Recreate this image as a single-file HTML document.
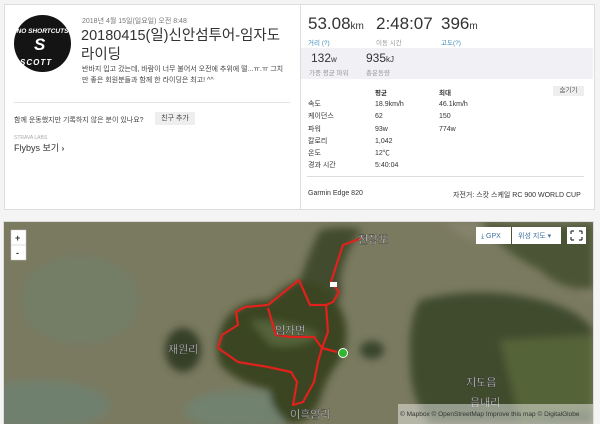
<!DOCTYPE html>
<html><head><meta charset="utf-8"><style>
*{margin:0;padding:0;box-sizing:border-box}
body{width:600px;height:424px;background:#f4f4f4;font-family:"Liberation Sans","Noto Sans CJK KR",sans-serif;color:#333;position:relative;overflow:hidden}
.a{position:absolute;white-space:nowrap}
.card{position:absolute;left:4px;top:4px;width:591px;height:206px;background:#fff;border:1px solid #ddd}
.s{font-size:7px;color:#333}
</style></head><body>
<div class="card"></div>
<div class="a" style="left:300px;top:4px;width:1px;height:206px;background:#ddd"></div>
<div class="a" style="left:14px;top:15px;width:57px;height:57px;border-radius:50%;background:#141414"></div>
<div class="a" style="left:16px;top:28px;font-size:6.5px;color:#fff;font-style:italic;font-weight:bold;width:53px;text-align:center">NO SHORTCUTS</div>
<div class="a" style="left:34px;top:35px;font-size:17px;color:#fff;font-weight:bold;font-style:italic">S</div>
<div class="a" style="left:20px;top:58px;font-size:8px;color:#fff;font-weight:bold;font-style:italic;letter-spacing:1px">SCOTT</div>
<div class="a" style="left:82px;top:16px;font-size:7px;color:#777">2018년 4월 15일(일요일) 오전 8:48</div>
<div class="a" style="left:81px;top:27px;font-size:14.5px;color:#333;line-height:19px">20180415(일)신안섬투어-임자도<br>라이딩</div>
<div class="a" style="left:82px;top:64px;font-size:7px;color:#444;line-height:11px">반바지 입고 갔는데, 바람이 너무 불어서 오전에 추위에 떨...ㅠ.ㅠ 그치<br>만 좋은 회원분들과 함께 한 라이딩은 최고! ^^</div>
<div class="a" style="left:14px;top:102px;width:276px;height:1px;background:#e4e4e4"></div>
<div class="a" style="left:14px;top:115px;font-size:7px;color:#444">함께 운동했지만 기록하지 않은 분이 있나요?</div>
<div class="a" style="left:155px;top:112px;width:40px;height:13px;background:#eee;font-size:7px;color:#444;text-align:center;line-height:13px">친구 추가</div>
<div class="a" style="left:14px;top:135px;font-size:5px;color:#aaa">STRAVA LABS</div>
<div class="a" style="left:14px;top:141px;font-size:9px;color:#333">Flybys 보기 <b style="font-size:8px">›</b></div>

<div class="a" style="left:308px;top:14px;font-size:17px;color:#333">53.08<span style="font-size:10px">km</span></div>
<div class="a" style="left:376px;top:14px;font-size:17px;color:#333">2:48:07</div>
<div class="a" style="left:441px;top:14px;font-size:17px;color:#333">396<span style="font-size:10px">m</span></div>
<div class="a" style="left:308px;top:37px;font-size:6.5px;color:#3a8ab5">거리 (?)</div>
<div class="a" style="left:376px;top:37px;font-size:6.5px;color:#999">이동 시간</div>
<div class="a" style="left:441px;top:37px;font-size:6.5px;color:#3a8ab5">고도(?)</div>
<div class="a" style="left:301px;top:48px;width:292px;height:31px;background:#f1f1f5"></div>
<div class="a" style="left:311px;top:51px;font-size:12px;color:#333">132<span style="font-size:8px">w</span></div>
<div class="a" style="left:366px;top:51px;font-size:12px;color:#333">935<span style="font-size:8px">kJ</span></div>
<div class="a" style="left:309px;top:67px;font-size:6.5px;color:#999">가중 평균 파워</div>
<div class="a" style="left:366px;top:67px;font-size:6.5px;color:#999">총운동량</div>
<div class="a" style="left:375px;top:87px;font-size:6.5px;color:#333;font-weight:bold">평균</div>
<div class="a" style="left:439px;top:87px;font-size:6.5px;color:#333;font-weight:bold">최대</div>
<div class="a" style="left:553px;top:86px;width:31px;height:10px;background:#eee;font-size:6.5px;color:#555;text-align:center;line-height:10px">숨기기</div>
<div class="a s" style="left:308px;top:99px;line-height:12.3px">속도<br>케이던스<br>파워<br>칼로리<br>온도<br>경과 시간</div>
<div class="a s" style="left:375px;top:99px;line-height:12.3px">18.9km/h<br>62<br>93w<br>1,042<br>12℃<br>5:40:04</div>
<div class="a s" style="left:439px;top:99px;line-height:12.3px">46.1km/h<br>150<br>774w</div>
<div class="a" style="left:307px;top:176px;width:277px;height:1px;background:#ddd"></div>
<div class="a s" style="left:308px;top:190px">Garmin Edge 820</div>
<div class="a s" style="left:453px;top:190px">자전거: 스캇 스케일 RC 900 WORLD CUP</div>

<svg class="a" style="left:0;top:0" width="600" height="424">
<defs><clipPath id="m"><rect x="4" y="222" width="589" height="202"/></clipPath>
<filter id="b"><feGaussianBlur stdDeviation="4"/></filter></defs>
<rect x="3" y="221" width="591" height="203" fill="#ddd"/>
<g clip-path="url(#m)">
<rect x="4" y="222" width="589" height="202" fill="#7a7a60"/>
<g filter="url(#b)">
<ellipse cx="80" cy="300" rx="60" ry="45" fill="#728069" opacity=".6"/>
<ellipse cx="40" cy="405" rx="70" ry="25" fill="#6a8476" opacity=".6"/>
<ellipse cx="240" cy="410" rx="55" ry="20" fill="#6a8a7e" opacity=".5"/>
<path d="M440 222 L470 240 L560 250 L580 290 L593 300 L593 222Z" fill="#85836c"/>
<path d="M420 300 Q480 285 540 300 Q580 310 593 330 L593 424 L430 424 Q410 400 410 360 Q408 320 420 300Z" fill="#414b2e"/>
<path d="M500 340 L593 335 L593 410 L520 420Z" fill="#5a6a3a" opacity=".8"/>
<path d="M480 222 Q560 226 593 222 L593 290 Q560 290 540 270 Q500 250 480 222Z" fill="#4b5535"/>
<path d="M320 230 Q345 225 362 230 Q345 250 340 280 Q345 300 330 310 Q310 300 300 280 Q310 250 320 230Z" fill="#424c2e"/>
<path d="M300 280 Q335 285 345 320 Q350 345 340 360 Q325 380 320 400 Q310 424 290 424 Q270 410 270 390 Q240 385 220 365 Q212 345 225 320 Q240 300 270 300 Q285 285 300 280Z" fill="#3a4524"/>
<path d="M250 320 Q290 320 320 335 Q300 350 270 345Z" fill="#5c6a40" opacity=".8"/>
<ellipse cx="183" cy="350" rx="18" ry="22" fill="#353f26"/>
<ellipse cx="372" cy="350" rx="12" ry="9" fill="#38442a"/>
</g>
<path d="M362 238 L343 245 L337 263 L331 282 L339 292 L333 302 L326 305 L310 305 L299 280 L268 305 L245 307 L236 312 L238 325 L222 335 L218 348 L238 362 L268 367 L291 372 L297 382 L293 405 L303 402 L314 382 L318 362 L322 348 L314 337 L291 337 L276 335 L268 308 M326 305 L328 332 L322 348 L337 352" fill="none" stroke="#e0211c" stroke-width="2.2" stroke-linejoin="round"/>
<rect x="330" y="282" width="7" height="5" fill="#fff"/>
<circle cx="343" cy="353" r="4.5" fill="#2db82d" stroke="#fff" stroke-width="1"/>
<g font-family="Liberation Sans,Noto Sans CJK KR,sans-serif" font-size="11" fill="#fff" stroke="#333" stroke-width=".4">
<text x="358" y="243">전장포</text><text x="275" y="334">임자면</text><text x="168" y="353">재원리</text><text x="290" y="418">이흑암리</text><text x="466" y="386">지도읍</text><text x="470" y="406">읍내리</text></g>
<rect x="398" y="404" width="195" height="20" fill="#fff" opacity=".45"/>
<text x="400" y="416" font-family="Liberation Sans,sans-serif" font-size="6.5" fill="#333">© Mapbox © OpenStreetMap Improve this map © DigitalGlobe</text>
</g>
<rect x="11" y="230" width="15" height="30" fill="#fff" stroke="#ccc" stroke-width=".5"/>
<line x1="11" y1="245" x2="26" y2="245" stroke="#ddd"/>
<text x="15" y="241" font-size="9" font-family="Liberation Sans,sans-serif" font-weight="bold" fill="#333">+</text>
<text x="16" y="256" font-size="9" font-family="Liberation Sans,sans-serif" font-weight="bold" fill="#333">-</text>
<rect x="476" y="227" width="35" height="17" fill="#fff"/>
<rect x="512" y="227" width="49" height="17" fill="#fff"/>
<text x="481" y="238" font-size="7" font-family="Liberation Sans,sans-serif" fill="#3a6fa0">⤓ GPX</text>
<text x="518" y="238" font-size="7" font-family="Liberation Sans,Noto Sans CJK KR,sans-serif" fill="#3a6fa0">위성 지도 ▾</text>
<rect x="567" y="227" width="19" height="17" fill="#fff"/>
<path d="M571 231 l3 0 m-3 0 l0 3 M582 231 l-3 0 m3 0 l0 3 M571 240 l3 0 m-3 0 l0 -3 M582 240 l-3 0 m3 0 l0 -3" stroke="#333" stroke-width="1.2" fill="none"/>
</svg>
</body></html>
